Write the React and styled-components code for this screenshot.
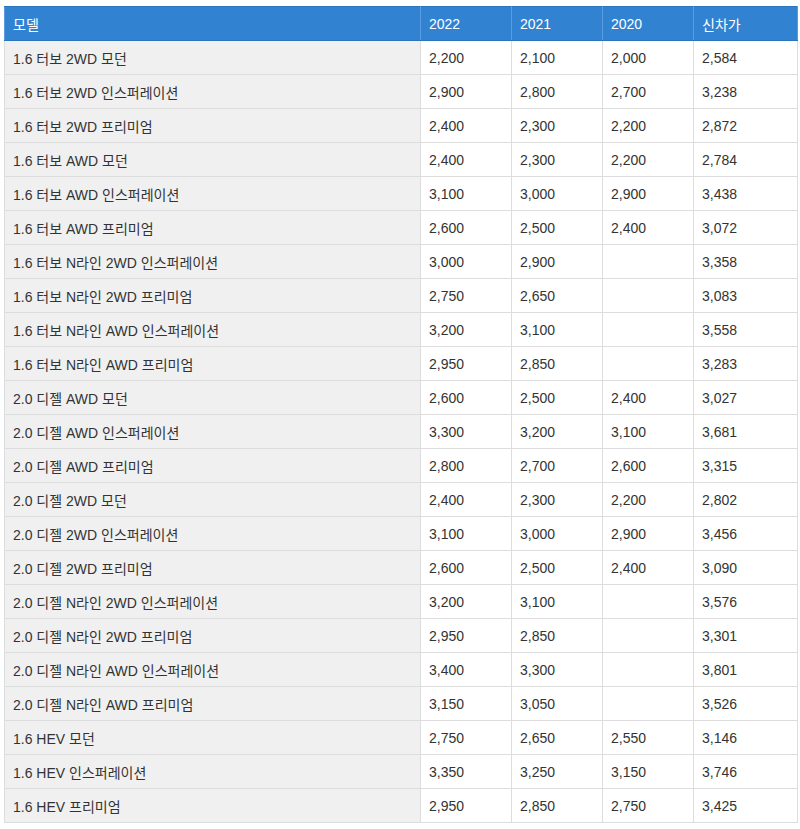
import React from 'react';
import styled, { createGlobalStyle } from 'styled-components';

const G = createGlobalStyle`body{margin:0;background:#fff;font-family:"Liberation Sans","Noto Sans CJK KR",Arial,sans-serif;}`;
const Wrap = styled.div`padding:6px 3px 0 4px;`;
const Table = styled.table`width:793px;border-collapse:collapse;table-layout:fixed;font-size:14px;color:#333;`;
const Col = styled.col`width:${p=>p.w};`;
const Th = styled.th`box-sizing:border-box;background:#3282d2;color:#fff;font-weight:normal;text-align:left;height:34px;padding:0 8px;border:1px solid #2a74c0;border-left-color:#5c9be0;border-right-color:#5c9be0;white-space:nowrap;`;
const Td = styled.td`box-sizing:border-box;height:34px;padding:0 8px;border:1px solid #ddd;white-space:nowrap;background:${p=>p.first?'#f0f0f0':'#fff'};`;

const raw = `1.6 터보 2WD 모던|2,200|2,100|2,000|2,584
1.6 터보 2WD 인스퍼레이션|2,900|2,800|2,700|3,238
1.6 터보 2WD 프리미엄|2,400|2,300|2,200|2,872
1.6 터보 AWD 모던|2,400|2,300|2,200|2,784
1.6 터보 AWD 인스퍼레이션|3,100|3,000|2,900|3,438
1.6 터보 AWD 프리미엄|2,600|2,500|2,400|3,072
1.6 터보 N라인 2WD 인스퍼레이션|3,000|2,900||3,358
1.6 터보 N라인 2WD 프리미엄|2,750|2,650||3,083
1.6 터보 N라인 AWD 인스퍼레이션|3,200|3,100||3,558
1.6 터보 N라인 AWD 프리미엄|2,950|2,850||3,283
2.0 디젤 AWD 모던|2,600|2,500|2,400|3,027
2.0 디젤 AWD 인스퍼레이션|3,300|3,200|3,100|3,681
2.0 디젤 AWD 프리미엄|2,800|2,700|2,600|3,315
2.0 디젤 2WD 모던|2,400|2,300|2,200|2,802
2.0 디젤 2WD 인스퍼레이션|3,100|3,000|2,900|3,456
2.0 디젤 2WD 프리미엄|2,600|2,500|2,400|3,090
2.0 디젤 N라인 2WD 인스퍼레이션|3,200|3,100||3,576
2.0 디젤 N라인 2WD 프리미엄|2,950|2,850||3,301
2.0 디젤 N라인 AWD 인스퍼레이션|3,400|3,300||3,801
2.0 디젤 N라인 AWD 프리미엄|3,150|3,050||3,526
1.6 HEV 모던|2,750|2,650|2,550|3,146
1.6 HEV 인스퍼레이션|3,350|3,250|3,150|3,746
1.6 HEV 프리미엄|2,950|2,850|2,750|3,425`;
const rows = raw.split('\n').map(l => l.split('|'));

export default function App() {
  return (
    <Wrap>
      <G />
      <Table>
        <colgroup>
          <Col w="416px" /><Col w="91px" /><Col w="91px" /><Col w="91px" /><Col w="104px" />
        </colgroup>
        <thead>
          <tr>
            <Th>모델</Th><Th>2022</Th><Th>2021</Th><Th>2020</Th><Th>신차가</Th>
          </tr>
        </thead>
        <tbody>
          {rows.map((r, i) => (
            <tr key={i}>{r.map((c, j) => <Td key={j} first={j === 0}>{c}</Td>)}</tr>
          ))}
        </tbody>
      </Table>
    </Wrap>
  );
}
